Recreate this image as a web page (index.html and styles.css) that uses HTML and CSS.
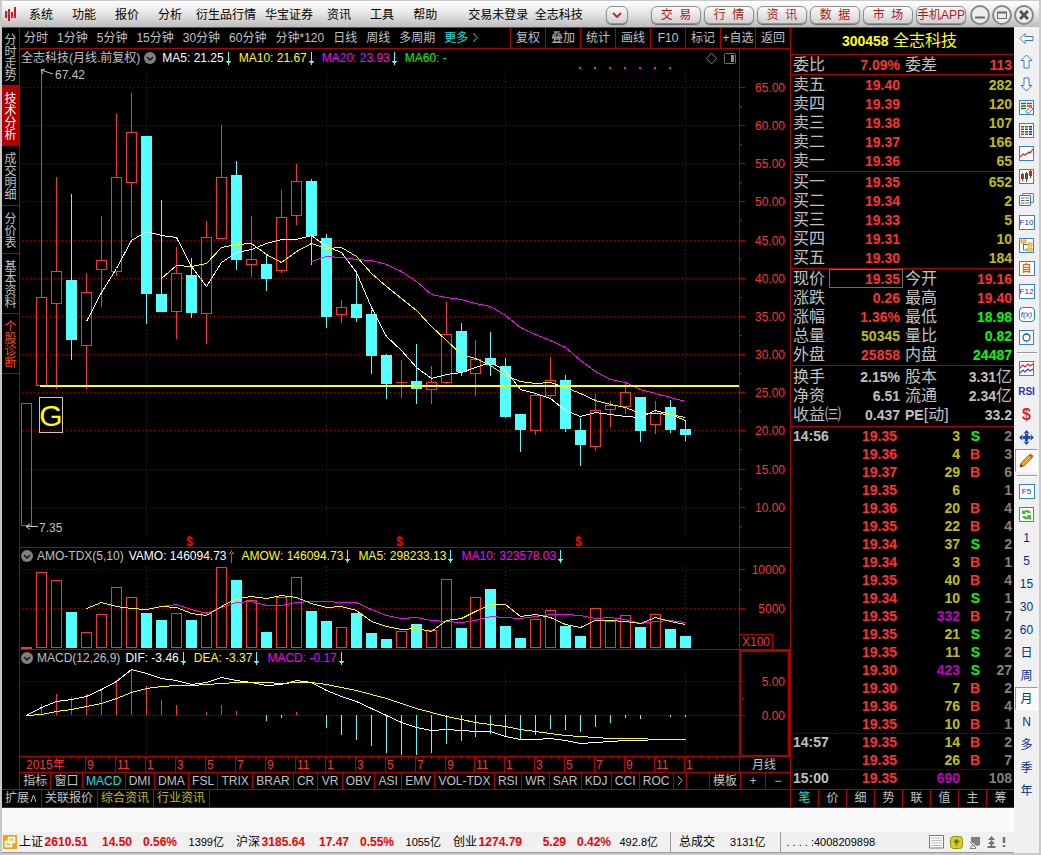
FILE: index.html
```html
<!DOCTYPE html>
<html lang="zh-CN">
<head>
<meta charset="utf-8">
<title>全志科技 300458</title>
<link rel="stylesheet" href="styles.css">
</head>
<body>
<svg class="defs" aria-hidden="true">
  <symbol id="down" viewBox="0 0 5 13"><path d="M2 0h1v13h-1zM0 9h5v1h-1v1h-3v-1h-1z" fill="#54ffff"/></symbol>
  <symbol id="up" viewBox="0 0 5 13"><path d="M2 0h1v13h-1zM0 4h5v-1h-1v-1h-3v1h-1z" fill="#ff3232"/></symbol>
  <symbol id="fold" viewBox="0 0 12 12"><circle cx="6" cy="6" r="6" fill="#808080"/><path d="M3 5l3 3 3-3" fill="none" stroke="#111" stroke-width="1.5"/></symbol>
</svg>
<div class="window">
  <header class="titlebar">
    <svg class="logo" viewBox="0 0 12 16"><path d="M1 4v7M4 2v12M7 5v6M10 0v11" stroke="#d0142c" stroke-width="2"/><path d="M1 5l3 1M6 11l4-1" stroke="#e06070"/></svg>
    <nav class="menu">
      <button>系统</button><button>功能</button><button>报价</button><button>分析</button><button class="wide">衍生品行情</button><button class="wide">华宝证券</button><button>资讯</button><button>工具</button><button>帮助</button>
    </nav>
    <span class="caption">交易未登录&nbsp; 全志科技</span>
    <button class="pill drop" aria-label="展开"><svg viewBox="0 0 10 6"><path d="M1 1l4 4 4-4" fill="none" stroke="#b83030" stroke-width="2"/></svg></button>
    <div class="pills">
      <button class="pill">交&nbsp; 易</button><button class="pill">行&nbsp; 情</button><button class="pill">资&nbsp; 讯</button><button class="pill">数&nbsp; 据</button><button class="pill">市&nbsp; 场</button><button class="pill">手机APP</button>
    </div>
    <div class="sys">
      <button aria-label="最小化"><svg viewBox="0 0 10 10"><path d="M0 7.5h10" stroke="#666" stroke-width="2"/></svg></button>
      <button aria-label="还原"><svg viewBox="0 0 10 10"><path d="M.5 2.5h9v6h-9z" fill="none" stroke="#666"/><path d="M0 2.5h10" stroke="#666" stroke-width="2"/></svg></button>
      <button aria-label="关闭"><svg viewBox="0 0 10 10"><path d="M1 1l8 8M9 1l-8 8" stroke="#555" stroke-width="3"/></svg></button>
    </div>
  </header>

  <div class="main">
    <div class="work">
      <div class="upper">
        <div class="left">
          <div class="mid">
            <nav class="rail">
              <button class="first">分时走势</button><button class="on">技术分析</button><button>成交明细</button><button>分价表</button><button>基本资料</button><button class="hot">个股诊断</button>
            </nav>
            <section class="charts">
              <div class="periods">
                <div class="spans"><button>分时</button><button>1分钟</button><button>5分钟</button><button>15分钟</button><button>30分钟</button><button>60分钟</button><button>分钟*120</button><button>日线</button><button>周线</button><button>多周期</button><button class="cyan">更多 <svg viewBox="0 0 6 9"><path d="M1 0l4 4.500-4 4.500" fill="none" stroke="#00e0e0"/></svg></button></div>
                <div class="acts"><button>复权</button><button>叠加</button><button>统计</button><button>画线</button><button>F10</button><button>标记</button><button>+自选</button><button>返回</button></div>
              </div>
              <div class="pane">
                <svg id="price" class="plot" viewBox="20 49 770 499"></svg>
                <div class="legend"><span>全志科技(月线.前复权)</span><svg class="fold"><use href="#fold"/></svg>
                  <span class="white">MA5: 21.25<svg class="arr"><use href="#down"/></svg></span><span class="yellow">MA10: 21.67<svg class="arr"><use href="#down"/></svg></span><span class="pink">MA20: 23.93<svg class="arr"><use href="#down"/></svg></span><span class="green">MA60: -</span></div>
              </div>
              <div class="pane">
                <svg id="amount" class="plot" viewBox="20 548 770 102"></svg>
                <div class="legend sub"><svg class="fold"><use href="#fold"/></svg><span class="name">AMO-TDX(5,10)</span>
                  <span class="white">VAMO: 146094.73<svg class="arr"><use href="#up"/></svg></span><span class="yellow">AMOW: 146094.73<svg class="arr"><use href="#down"/></svg></span><span class="yellow">MA5: 298233.13<svg class="arr"><use href="#down"/></svg></span><span class="pink">MA10: 323578.03<svg class="arr"><use href="#down"/></svg></span></div>
              </div>
              <div class="pane">
                <svg id="macd" class="plot" viewBox="20 650 770 107"></svg>
                <div class="legend sub"><svg class="fold"><use href="#fold"/></svg><span class="name">MACD(12,26,9)</span>
                  <span class="white">DIF: -3.46<svg class="arr"><use href="#down"/></svg></span><span class="yellow">DEA: -3.37<svg class="arr"><use href="#down"/></svg></span><span class="pink">MACD: -0.17<svg class="arr"><use href="#down"/></svg></span></div>
              </div>
              <svg id="months" class="plot" viewBox="20 757 770 16"></svg>
              <div class="inds">
                <div class="indlist"><button>指标</button><button>窗口</button><button class="cyan">MACD</button><button>DMI</button><button>DMA</button><button>FSL</button><button>TRIX</button><button>BRAR</button><button>CR</button><button>VR</button><button>OBV</button><button>ASI</button><button>EMV</button><button>VOL-TDX</button><button>RSI</button><button>WR</button><button>SAR</button><button>KDJ</button><button>CCI</button><button>ROC</button><button aria-label="更多指标"><svg viewBox="0 0 6 9"><path d="M1 0l4 4.500-4 4.500" fill="none" stroke="#c0c0c0"/></svg></button></div>
                <div class="indtools"><button>模板</button><button>+</button><button>−</button></div>
              </div>
            </section>
          </div>
          <div class="links"><button>扩展<svg viewBox="0 0 7 8"><path d="M1 8l2.500-7L6 8" fill="none" stroke="#c0c0c0"/></svg></button><button>关联报价</button><button class="olive">综合资讯</button><button class="olive">行业资讯</button></div>
        </div>

        <aside class="quote">
          <h1><b>300458</b> 全志科技</h1>
          <table class="info one"><tr><th>委比</th><td class="r">7.09%</td><th>委差</th><td class="r">113</td></tr></table>
          <table class="book">
            <tr><th>卖五</th><td>19.40</td><td>282</td></tr><tr><th>卖四</th><td>19.39</td><td>120</td></tr><tr><th>卖三</th><td>19.38</td><td>107</td></tr><tr><th>卖二</th><td>19.37</td><td>166</td></tr><tr><th>卖一</th><td>19.36</td><td>65</td></tr>
          </table>
          <table class="book">
            <tr><th>买一</th><td>19.35</td><td>652</td></tr><tr><th>买二</th><td>19.34</td><td>2</td></tr><tr><th>买三</th><td>19.33</td><td>5</td></tr><tr><th>买四</th><td>19.31</td><td>10</td></tr><tr><th>买五</th><td>19.30</td><td>184</td></tr>
          </table>
          <table class="info five">
            <tr><th>现价</th><td class="r now">19.35</td><th>今开</th><td class="r">19.16</td></tr>
            <tr><th>涨跌</th><td class="r">0.26</td><th>最高</th><td class="r">19.40</td></tr>
            <tr><th>涨幅</th><td class="r">1.36%</td><th>最低</th><td class="g">18.98</td></tr>
            <tr><th>总量</th><td class="y">50345</td><th>量比</th><td class="g">0.82</td></tr>
            <tr><th>外盘</th><td class="r">25858</td><th>内盘</th><td class="g">24487</td></tr>
          </table>
          <table class="info three">
            <tr><th>换手</th><td>2.15%</td><th>股本</th><td>3.31<i>亿</i></td></tr>
            <tr><th>净资</th><td>6.51</td><th>流通</th><td>2.34<i>亿</i></td></tr>
            <tr><th>收益㈢</th><td>0.437</td><th><b>PE</b>[动]</th><td>33.2</td></tr>
          </table>
          <table class="ticks">
            <tr><td>14:56</td><td>19.35</td><td>3</td><td class="s">S</td><td>2</td></tr>
            <tr><td></td><td>19.36</td><td>4</td><td>B</td><td>3</td></tr>
            <tr><td></td><td>19.37</td><td>29</td><td>B</td><td>6</td></tr>
            <tr><td></td><td>19.35</td><td>6</td><td></td><td>1</td></tr>
            <tr><td></td><td>19.36</td><td>20</td><td>B</td><td>4</td></tr>
            <tr><td></td><td>19.35</td><td>22</td><td>B</td><td>4</td></tr>
            <tr><td></td><td>19.34</td><td>37</td><td class="s">S</td><td>2</td></tr>
            <tr><td></td><td>19.34</td><td>3</td><td>B</td><td>1</td></tr>
            <tr><td></td><td>19.35</td><td>40</td><td>B</td><td>4</td></tr>
            <tr><td></td><td>19.34</td><td>10</td><td class="s">S</td><td>1</td></tr>
            <tr><td></td><td>19.35</td><td class="big">332</td><td>B</td><td>7</td></tr>
            <tr><td></td><td>19.35</td><td>21</td><td class="s">S</td><td>2</td></tr>
            <tr><td></td><td>19.35</td><td>11</td><td class="s">S</td><td>2</td></tr>
            <tr><td></td><td>19.30</td><td class="big">423</td><td class="s">S</td><td>27</td></tr>
            <tr><td></td><td>19.30</td><td>7</td><td>B</td><td>2</td></tr>
            <tr><td></td><td>19.36</td><td>76</td><td>B</td><td>4</td></tr>
            <tr><td></td><td>19.35</td><td>10</td><td>B</td><td>1</td></tr>
            <tr class="minute"><td>14:57</td><td>19.35</td><td>14</td><td>B</td><td>2</td></tr>
            <tr><td></td><td>19.35</td><td>26</td><td>B</td><td>7</td></tr>
            <tr class="minute"><td>15:00</td><td>19.35</td><td class="big">690</td><td></td><td>108</td></tr>
          </table>
          <div class="qtabs"><button class="cyan">笔</button><button>价</button><button>细</button><button>势</button><button>联</button><button>值</button><button>主</button><button>筹</button></div>
        </aside>
      </div>
      <div class="blank"></div>
      <footer class="status">
        <svg class="home" viewBox="0 0 14 14"><path d="M0 0h14v14H0z" fill="#f0a418"/><path d="M5.500 2.500h6v5h-6zM2.500 6.500h6v5h-6z" fill="#f8c860" stroke="#fff" stroke-width="1.500"/></svg>
        <div class="index"><span>上证</span><b>2610.51</b><b>14.50</b><b>0.56%</b><small>1399亿</small></div>
        <div class="index"><span>沪深</span><b>3185.64</b><b>17.47</b><b>0.55%</b><small>1055亿</small></div>
        <div class="index"><span>创业</span><b>1274.79</b><b>5.29</b><b>0.42%</b><small>492.8亿</small></div>
        <div class="total"><span>总成交</span><small>3131亿</small></div>
        <small class="tel">. . . . :4008209898</small>
        <div class="tray">
          <svg width="15" height="14" viewBox="0 0 15 14"><path d="M.5.500h14v12.500H.500z" fill="#fff" stroke="#777"/><path d="M2 3h11M2 5.500h11M2 8h11M2 10.500h11" stroke="#bbb"/></svg>
          <svg width="13" height="13" viewBox="0 0 13 13"><rect x=".5" y=".5" width="12" height="12" rx="3" fill="#d8d020" stroke="#909010"/><path d="M3.500 6l3-3 3 3h-2v2h-2v-2zM5 9.500h3" fill="#665" stroke="#665" stroke-width=".5"/></svg>
          <svg width="12" height="13" viewBox="0 0 12 13"><path d="M2 1h9v8l-3 1-6-4z" fill="#808080"/><path d="M1 6l4 4M4 9l-3 3.500h6L5 9" fill="none" stroke="#808080"/></svg>
          <svg width="9" height="13" viewBox="0 0 9 13"><path d="M4.500 0L8 4H1zM4.500 4L8 8H1zM3.500 8h2v2h3v2h-8v-2h3z" fill="#707070"/></svg>
          <svg width="4" height="13" viewBox="0 0 4 13"><path d="M2 1v6M2 9v2" stroke="#707070" stroke-width="2.500"/></svg>
        </div>
      </footer>
    </div>

    <nav class="tools">
      <button aria-label="后退"><svg viewBox="0 0 15 15"><path d="M1 7.500l5-5v3h8v4H6v3z" fill="#fff" stroke="#3078d8"/></svg></button>
      <button aria-label="上移"><svg viewBox="0 0 15 15"><path d="M7.500 1l5.500 5.500h-3V14h-5V6.500H2z" fill="#fff" stroke="#3078d8"/></svg></button>
      <button aria-label="下移"><svg viewBox="0 0 15 15"><path d="M7.500 14L2 8.500h3V1h5v7.500h3z" fill="#fff" stroke="#3078d8"/></svg></button>
      <button aria-label="报价设置"><svg class="box" viewBox="1 1 13 13"><path d="M2 3.500h5M2 6h5M2 8.500h5" stroke="#008020" stroke-width="1.500"/><path d="M8 3.500h5M8 6h5" stroke="#f01818" stroke-width="1.500"/><path d="M7 11l5-4 2 2-4 4c-3 1-4-1-3-2" fill="#eee" stroke="#777"/></svg></button>
      <button aria-label="列表"><svg class="box" viewBox="1 1 13 13"><path d="M3.500 3v10" stroke="#f01818" stroke-width="3" stroke-dasharray="1.500 1"/><path d="M7.500 3v10" stroke="#008020" stroke-width="3" stroke-dasharray="1.500 1"/><path d="M11.500 3v10" stroke="#1818f0" stroke-width="3" stroke-dasharray="1.500 1"/></svg></button>
      <button aria-label="走势"><svg class="box" viewBox="1 1 13 13"><path d="M1 11l3-3 2 1 4-3 1 1 3-4" fill="none" stroke="#d82020" stroke-width="1.200"/></svg></button>
      <button aria-label="K线"><svg class="box" viewBox="1 1 13 13"><path d="M3.500 4v8M11.500 1v8" stroke="#e01818"/><path d="M3.500 5v5M11.500 2v5" stroke="#e01818" stroke-width="3"/><path d="M7.500 3v10" stroke="#008020"/><path d="M7.500 4v6" stroke="#008020" stroke-width="3"/></svg></button>
      <button aria-label="多窗口"><svg viewBox="0 0 15 15"><path d="M3.500 3V1.500h11v9H12" fill="none" stroke="#3090e8"/><path d="M.5 3.500h11v10H.500z" fill="#fff" stroke="#3078d8"/><path d="M2 6h8M2 8.500h8M2 11h8" stroke="#666" stroke-dasharray="3.500 1"/></svg></button>
      <button><span class="tag">F10</span></button>
      <button aria-label="树形"><svg class="box" viewBox="1 1 13 13"><path d="M4.500 4v8H8M5 6.500h4" fill="none" stroke="#3078d8"/><path d="M2 2h5v3H2zM9 5h4v3H9zM8 10h5v3H8z" fill="#fcd850" stroke="#e0a020"/></svg></button>
      <button><span class="tag self">自</span></button>
      <button><span class="tag">F12</span></button>
      <button><span class="tag fx">f(x)</span></button>
      <button aria-label="圈"><svg class="box" viewBox="1 1 13 13"><circle cx="7.500" cy="7.500" r="3.500" fill="none" stroke="#1858c0" stroke-width="1.300"/></svg></button>
      <hr>
      <button aria-label="叠加指标"><svg class="box" viewBox="1 1 13 13"><path d="M1 7l3-3 2 2 3-3 2 2 3-2" fill="none" stroke="#e02020" stroke-width="1.200"/><path d="M1 12l3-3 2 2 3-3 2 2 3-2" fill="none" stroke="#2040e0" stroke-width="1.200"/></svg></button>
      <button class="rsi">RSI</button>
      <button class="dollar">$</button>
      <button aria-label="移动"><svg viewBox="0 0 15 15"><path d="M7.500 0l3 3.500h-6zM7.500 15l3-3.500h-6zM0 7.500l3.500-3v6zM15 7.500l-3.500-3v6zM4 6h2V4h3v2h2v3H9v2H6V9H4z" fill="#1848b8"/></svg></button>
      <button class="on" aria-label="画笔"><svg viewBox="0 0 15 15"><path d="M1 14l1-4 8-8 3 3-8 8z" fill="#f0a020" stroke="#a86010" stroke-width=".8"/><path d="M10 2l1.500-1.500L14.500 3 13 5z" fill="#e04848"/><path d="M1 14l1-3 2 2z" fill="#333"/></svg></button>
      <hr>
      <button><span class="tag">F5</span></button>
      <button aria-label="刷新"><svg class="box" viewBox="1 1 13 13"><path d="M3 7V3l2 1c3-2 6-1 7 2H9c-1-1-2-1-3 0l1 1zM12 8v5l-2-1c-3 1-6 0-7-3h3c1 1 2 1 3 0L8 8z" fill="#48b838"/></svg></button>
      <button>1</button><button>5</button><button>15</button><button>30</button><button>60</button><button>日</button><button>周</button><button class="on">月</button><button>N</button><button>多</button><button>季</button><button>年</button>
    </nav>
  </div>
</div>
<script src="chart.js"></script>
</body>
</html>
```
FILE: styles.css
```css
* { box-sizing: border-box; }
body { margin: 0; background: #c9c9c9; font: 12px/16px "Liberation Sans", "Noto Sans CJK SC", sans-serif; color: #c0c0c0; }
button { border: 0; padding: 0; margin: 0; background: none; font: inherit; color: inherit; white-space: nowrap; }
.defs { position: absolute; width: 0; height: 0; }
.window { padding: 1px 2px 0; }
.cyan { color: #00e6e6; }
.olive { color: #c0c000; }

.titlebar { display: flex; align-items: center; height: 26px; padding: 2px 5px 0 3px; background: linear-gradient(#ffffff, #e4e4e4 50%, #bcbcbc); color: #000; }
.logo { width: 12px; height: 16px; }
.menu { display: flex; gap: 1px; margin-left: 3px; }
.menu button { padding: 0 9px; }
.menu .wide { padding: 0 4px; }
.caption { margin-left: 22px; white-space: nowrap; }
.pill { width: 50px; height: 18px; border: 1px solid #909090; border-radius: 6px; background: linear-gradient(#fafafa, #d0d0d0); box-shadow: 0 1px 1px #666; color: #b01818; line-height: 16px; }
.pills { display: flex; gap: 3px; margin-left: auto; }
.drop { width: 22px; margin-left: 23px; display: flex; align-items: center; justify-content: center; }
.drop svg { width: 10px; height: 6px; }
.sys { display: flex; gap: 2px; margin-left: 4px; }
.sys button { width: 20px; height: 20px; border: 2px solid #888; border-radius: 50%; background: #ececec; display: flex; align-items: center; justify-content: center; }
.sys svg { width: 10px; height: 10px; }

.main { display: flex; }
.work { flex: 1; min-width: 0; border-top: 1px solid #555; }
.upper { display: flex; background: #000; }
.left { flex: 1; min-width: 0; display: flex; flex-direction: column; border-right: 1px solid #b00000; }
.mid { display: flex; border-bottom: 1px solid #b00000; }

.rail { width: 18px; border-right: 1px solid #b00000; display: flex; flex-direction: column; }
.rail button { writing-mode: vertical-rl; text-orientation: upright; width: 17px; line-height: 14px; padding: 6px 3px 5px 0; border-bottom: 1px solid #b00000; }
.rail .first { padding: 5px 3px 4px 0; }
.rail .on { background: #b00000; color: #fff; }
.rail .hot { color: #ff5010; }

.charts { flex: 1; min-width: 0; }
.periods { display: flex; justify-content: space-between; border-bottom: 1px solid #b00000; }
.spans { display: flex; gap: 9px; padding-left: 4px; line-height: 20px; }
.spans svg, .indlist svg { width: 6px; height: 9px; }
.acts { display: flex; line-height: 20px; }
.acts button { width: 35px; border-left: 1px solid #b00000; }
.pane { position: relative; }
.plot { display: block; width: 100%; height: auto; }
.plot text { font: 12px "Liberation Sans", "Noto Sans CJK SC", sans-serif; }
.plot .mark { font-size: 30px; }
.plot .bonus { font-size: 12px; font-weight: bold; }
.legend { position: absolute; top: 1px; left: 1px; display: flex; align-items: center; gap: 8px; white-space: nowrap; }
.legend span { display: flex; align-items: center; gap: 2px; }
.legend.sub { top: 0; }
.legend .fold { margin: 0 -2px 0 -4px; }
.legend.sub .fold { margin: 0 -4px 0 0; }
.legend .name { margin-right: -3px; }
.fold { width: 12px; height: 12px; }
.arr { width: 5px; height: 13px; }
.white { color: #fff; }
.yellow { color: #ffff00; }
.pink { color: #ff00ff; }
.green { color: #00ff00; }

.inds { display: flex; gap: 22px; line-height: 16px; }
.indlist { flex: 1; min-width: 0; display: flex; }
.indlist button { flex: 1 1 auto; padding: 0 2px; border-right: 1px solid #b00000; }
.indtools { display: flex; }
.indtools button { width: 25px; border-left: 1px solid #b00000; }
.indtools button:first-child { width: 31px; }
.links { display: flex; border-bottom: 1px solid #b00000; line-height: 17px; }
.links button { padding: 0 4px 0 3px; border-right: 1px solid #b00000; }
.links svg { width: 7px; height: 8px; margin-left: 1px; }

.quote { width: 223px; }
.quote h1 { margin: 0; font: 16px/26px "Liberation Sans", "Noto Sans CJK SC", sans-serif; color: #ffff00; text-align: center; border-bottom: 1px solid #b00000; padding-right: 6px; }
.quote h1 b { font-size: 14px; }
.quote table { width: 100%; border-spacing: 0; table-layout: fixed; border-bottom: 1px solid #b00000; font-weight: bold; font-size: 14px; }
.quote td, .quote th { padding: 0; height: 19px; line-height: 18px; text-align: right; overflow: visible; white-space: nowrap; }
.quote th { font-size: 16px; font-weight: normal; text-align: left; padding-left: 2px; }
.quote th b { font-size: 14px; }
.quote i { font-style: normal; font-weight: normal; font-size: 16px; }
.info th { width: 38px; }
.info td:nth-child(2) { width: 74px; padding-right: 3px; }
.info td:nth-child(4), .book td:nth-child(3) { padding-right: 2px; }
.info .now { outline: 1px solid #707070; outline-offset: -1px; }
.book, .five { padding-bottom: 1px; }
.three { padding: 1px 0 2px; }
.book th { width: 38px; }
.book td:nth-child(2) { width: 71px; color: #ff3232; }
.book td:nth-child(3) { color: #c0c000; }
.r { color: #ff3232; }
.g { color: #00ff00; }
.y { color: #c0c000; }
.ticks { padding-bottom: 2px; }
.quote .ticks td { height: 18px; line-height: 17px; }
.ticks td:nth-child(1) { width: 44px; text-align: left; padding-left: 2px; }
.ticks td:nth-child(2) { width: 62px; color: #ff3232; }
.ticks td:nth-child(3) { width: 63px; color: #c0c000; }
.ticks td:nth-child(4) { width: 20px; color: #ff3232; }
.ticks td:nth-child(5) { padding-right: 2px; color: #808080; }
.ticks td.big { color: #c000c0; }
.ticks td.s { color: #00ff00; }
.ticks .minute td { border-top: 1px dotted #900000; }
.qtabs { display: flex; border-bottom: 1px solid #b00000; line-height: 17px; }
.qtabs button { flex: 1; border-right: 1px solid #b00000; }
.qtabs button:last-child { border-right: 0; }

.blank { height: 24px; background: #fafafa; }
.status { display: flex; align-items: center; height: 21px; padding-left: 1px; background: #f0f0f0; color: #000; white-space: nowrap; border-bottom: 1px solid #999; }
.status small { font-size: 11px; }
.home { width: 14px; height: 14px; margin-right: 2px; }
.index { display: grid; grid-template-columns: 25px 44px 44px 45px 47px; margin-right: 12px; text-align: right; }
.index span { text-align: left; }
.index b { color: #f00000; }
.total { display: flex; gap: 15px; margin-right: 14px; padding-left: 8px; border-left: 1px solid #999; line-height: 20px; }
.tel { padding-left: 6px; border-left: 1px solid #999; line-height: 20px; }
.tray { display: flex; align-items: center; gap: 6px; margin-left: auto; padding-right: 8px; }

.tools { width: 25px; display: flex; flex-direction: column; background: #f0f0f0; color: #003090; padding: 0 1px; }
.tools button { height: 23px; display: flex; align-items: center; justify-content: center; font-size: 12px; }
.tools svg { width: 15px; height: 15px; }
.tools .box, .tag { border: 1px solid #3080e8; background: #fff; }
.tools .on { background: #fafafa; border: 1px solid #999; border-right-color: #fff; border-bottom-color: #fff; }
.tools hr { width: 20px; height: 2px; margin: 3px auto; border: 0; border-top: 1px solid #999; background: #fff; }
.tag { width: 16px; height: 15px; font-size: 8px; line-height: 13px; color: #1030c0; text-align: center; }
.tag.self { color: #f06010; font-weight: bold; font-size: 10px; }
.tag.fx { border-color: #109090; border-radius: 4px; font-style: italic; }
.tools .rsi { font-size: 10px; font-weight: bold; color: #3030c8; }
.tools .dollar { font-size: 16px; font-weight: bold; color: #c83028; }
```
FILE: chart.js
```js
const RED = '#ff3232', CYAN = '#54ffff', LINE = '#b00000', GRID = '#a00000';
const columnX = i => (i < 29 ? 41 : 40) + 15 * i;

const put = (id, markup) => { document.getElementById(id).innerHTML = markup; };
const seg = (x1, y1, x2, y2, color, extra = '') =>
  `<path d="M${x1} ${y1}L${x2} ${y2}" stroke="${color}" fill="none" shape-rendering="crispEdges" ${extra}/>`;
const box = (x, y, w, h, color, fill = 'none', extra = '') =>
  `<rect x="${x}" y="${y}" width="${w}" height="${h}" stroke="${color}" fill="${fill}" shape-rendering="crispEdges" ${extra}/>`;
const label = (x, y, text, color = RED, anchor = 'end') =>
  `<text x="${x}" y="${y}" fill="${color}" text-anchor="${anchor}">${text}</text>`;
const curve = (first, ys, color) =>
  `<polyline fill="none" stroke="${color}" shape-rendering="crispEdges" points="${ys.map((y, k) => columnX(first + k) + .5 + ',' + (y + .5)).join(' ')}"/>`;
const yearLines = (y1, y2) => [146, 326, 505, 685].map(x => seg(x + .5, y1, x + .5, y2, GRID, 'stroke-dasharray="1 3"')).join('');
const level = (y, gap = 3) => seg(22, y + .5, 739, y + .5, GRID, `stroke-dasharray="1 ${gap}"`) + seg(740, y + .5, 745, y + .5, LINE);
const bar = (x, top, bottom, falling) => {
  if (falling) return `<rect x="${x - 5}" y="${top}" width="11" height="${bottom - top}" fill="${CYAN}"/>`;
  if (top === bottom) return seg(x - 5, top + .5, x + 6, top + .5, RED);
  return box(x - 4.5, top + .5, 10, bottom - top, RED);
};

/* high, body top, body bottom, low, falling */
const candles = [
  [71,297,385,385,0],[177,271,303,389,0],[194,280,340,360,1],[273,292,345,389,0],[216,260,269,307,0],[114,177,271,276,0],
  [93,132,182,238,0],[136,136,294,324,1],[200,294,312,312,1],[247,273,311,339,0],[258,275,313,318,1],[221,237,313,344,0],
  [125,177,238,238,0],[161,175,260,270,1],[216,259,264,277,0],[254,264,279,291,1],[190,217,270,273,0],[164,181,215,225,0],
  [179,181,236,265,1],[234,238,317,328,1],[300,307,314,323,0],[271,304,318,322,1],[310,314,356,374,1],[354,355,384,399,1],
  [360,382,382,398,0],[344,381,389,404,1],[366,382,389,404,0],[302,334,382,384,0],[323,331,372,376,1],[340,359,373,396,0],
  [332,358,365,376,1],[358,366,417,418,1],[414,414,430,452,1],[394,395,430,435,0],[357,380,395,399,0],[375,380,429,432,1],
  [418,430,445,466,1],[394,410,446,451,0],[401,405,409,427,0],[384,392,406,414,0],[397,397,431,442,1],[401,413,424,434,0],
  [400,407,430,433,1],[420,429,435,441,1]];
const ma5 = [321,292,268,240,231,235,237,266,286,262,252,249,243,239,239,235,246,252,272,307,336,350,367,378,374,372,367,362,370,389,393,398,410,416,412,414,416,417,410,414,420];
const ma10 = [278,265,266,263,247,244,243,254,262,251,243,248,247,256,273,286,298,310,326,340,354,358,365,375,381,383,382,387,393,400,404,407,413,413,414,417];
const ma20 = [261,256,257,259,260,264,271,281,294,297,299,303,306,315,327,334,340,347,360,371,379,382,389,393,397,401];

let s = yearLines(69, 536);
for (let k = 0; k < 12; k++) {
  const y = Math.round(87 + k * 38.15);
  s += level(y) + seg(740, y + 19.5, 742, y + 19.5, LINE) + label(785, y + 5, (65 - 5 * k).toFixed(2));
}
s += seg(739.5, 49, 739.5, 548, LINE) + seg(20, 547.5, 790, 547.5, LINE);
candles.forEach(([hi, top, bot, lo, fall], i) => {
  const x = columnX(i), c = fall ? CYAN : RED;
  s += seg(x + .5, hi, x + .5, top, c) + seg(x + .5, bot, x + .5, lo, c) + bar(x, top, bot, fall);
});
s += curve(3, ma5, '#fff') + curve(8, ma10, '#ff0') + curve(18, ma20, '#f0f');
s += box(21.5, 403.5, 10, 122, RED) + seg(40, 386, 739, 386, '#ff0', 'stroke-width="2"');
s += box(39.5, 397.5, 23, 35, '#c8c8c8') + `<text class="mark" x="51" y="426" fill="#ff0" text-anchor="middle">G</text>`;
s += `<path d="M41 70l12 4M41 70l4-1M41 70l2 4M26 526.500h12M30 523.500l-4 3 4 3" stroke="#c0c0c0" fill="none"/>`;
s += label(55, 79, '67.42', '#c0c0c0', 'start') + label(39, 532, '7.35', '#c0c0c0', 'start');
for (let x = 579; x <= 669; x += 15) s += `<rect x="${x}" y="67" width="2" height="2" fill="#f0f"/>`;
s += `<path d="M711.500 53l5 5.500-5 5.500-5-5.500z" stroke="#808080" fill="none"/><rect x="724.500" y="53.500" width="11" height="10" rx="1" stroke="#707070" fill="none"/><path d="M731 55h3v7h-3z" fill="#909090"/>`;
[189, 399, 578].forEach(x => {
  s += `<text class="bonus" x="${x + .5}" y="546" text-anchor="middle" fill="#f00">$</text><path d="M${x - 2} 538l2.500-2.500 2.500 2.500z" fill="#f00"/>`;
});
put('price', s);

const amounts = [572,580,612,632,614,587,597,613,620,613,620,612,567,580,600,632,597,577,611,621,627,613,633,639,631,624,630,579,628,597,589,626,638,619,610,626,636,608,621,615,627,614,629,636];
const amo5 = [608,602,606,608,609,606,607,613,615,606,598,596,598,595,597,603,607,606,610,621,626,629,628,631,620,618,611,604,604,616,614,617,624,627,620,620,621,623,617,621,624];
const amo10 = [606,604,609,613,607,602,601,605,605,602,601,601,602,602,609,615,618,617,620,621,622,620,616,617,618,616,614,614,615,618,617,619,623,621,620,622];
s = yearLines(567, 649) + level(569) + level(608) + seg(740, 589.5, 742, 589.5, LINE);
s += label(785, 574, '10000') + label(785, 613, '5000');
s += `<rect x="21" y="647" width="11" height="2" fill="${RED}"/>`;
amounts.forEach((top, i) => { s += bar(columnX(i), top, candles[i][4] ? 648 : 647, candles[i][4]); });
s += curve(8, amo10, '#f0f') + curve(3, amo5, '#ff0');
s += seg(739.5, 548, 739.5, 650, LINE) + seg(20, 649.5, 790, 649.5, LINE) + box(739.5, 634.5, 33, 15, LINE) + label(742, 646, 'X100', RED, 'start');
put('amount', s);

const hist = [704,694,697,694,690,680,670,686,700,705,715,712,705,711,715,720,717,712,715,727,734,739,745,752,754,754,752,743,740,736,733,735,738,734,728,729,731,726,722,717,718,715,716,716];
const dif = [715,707,701,699,696,689,681,669,673,678,680,684,682,677,680,682,685,684,680,682,690,696,701,708,715,722,727,730,729,730,731,731,736,739,739,738,740,743,742,741,740,740,739,739,739];
const dea = [715,714,711,709,706,703,698,692,688,686,685,685,684,683,682,682,682,683,682,682,684,687,690,694,698,703,708,712,716,719,722,724,726,729,731,733,735,736,737,738,738,738,739,739,739];
s = yearLines(669, 756) + level(681) + level(715, 1) + seg(742, 698.5, 744, 698.5, LINE) + label(785, 686, '5.00') + label(785, 720, '0.00');
hist.forEach((y, i) => { if (y !== 715) s += seg(columnX(i) + .5, 715, columnX(i) + .5, y < 715 ? y : y + 1, y < 715 ? RED : CYAN); });
s += curve(-1, dif, '#fff') + curve(-1, dea, '#ff0');
s += seg(20, 756.5, 790, 756.5, LINE) + box(740, 651, 49, 105, LINE, 'none', 'stroke-width="2"');
put('macd', s);

s = seg(20, 772.5, 790, 772.5, LINE) + seg(739.5, 757, 739.5, 773, LINE) + label(26, 769, '2015年', RED, 'start');
const months = [9, 11, 1, 3, 5, 7];
for (let i = 3, k = 0; i <= 43; i += 2, k++) {
  s += seg(columnX(i) - .5, 757, columnX(i) - .5, 772, LINE) + label(columnX(i) + 1, 769, months[k % 6], RED, 'start');
}
for (let x = 48; x < 735; x += 7.5) s += seg(Math.round(x) + .5, 757, Math.round(x) + .5, 759, LINE);
s += label(764, 769, '月线', '#c0c0c0', 'middle');
put('months', s);
```
